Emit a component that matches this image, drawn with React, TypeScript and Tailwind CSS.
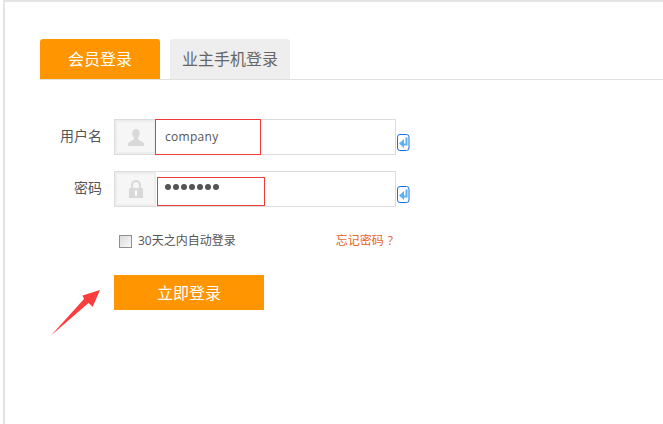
const fontStack = { fontFamily: '"Open Sans", "Noto Sans CJK SC", sans-serif' };

function ReturnKey() {
  return (
    <svg width="13" height="18" viewBox="0 0 13 18" className="ml-[1px] mt-[15px] shrink-0">
      <rect x="0.5" y="0.5" width="11.500" height="16" rx="2.500" fill="#fff" stroke="#1470e8" />
      <path d="M8.500 3.500h2v8H7V14L2 9.500 7 5v4.500h1.500z" fill="#5db2f5" />
    </svg>
  );
}

function UserIcon() {
  return (
    <svg width="16" height="17" viewBox="0 0 16 17">
      <path d="M8 0c2.400 0 3.700 1.800 3.700 4.200 0 2-.8 3.600-1.700 4.600v1.600c1.400.9 4.600 1.600 6 4.100v2.500H0v-2.500c1.400-2.500 4.600-3.200 6-4.100V8.800C5.100 7.800 4.300 6.200 4.300 4.200 4.300 1.800 5.600 0 8 0z" fill="#d9d9d9" />
    </svg>
  );
}

function LockIcon() {
  return (
    <svg width="14" height="18" viewBox="0 0 14 18">
      <path d="M3 8V5a4 4 0 0 1 8 0v3" fill="none" stroke="#d9d9d9" strokeWidth="2" />
      <path d="M0 8h14v10H0z" fill="#d9d9d9" />
      <rect x="6" y="10.500" width="2" height="5" fill="#fff" />
    </svg>
  );
}

type FieldRowProps = {
  label: string;
  icon: React.ReactNode;
  children: React.ReactNode;
  className?: string;
};

function FieldRow({ label, icon, children, className = '' }: FieldRowProps) {
  return (
    <div className={`flex ${className}`}>
      <label className="w-[62px] h-[36px] leading-[34px] text-right text-[14px] text-[#555] mr-[12px]">{label}</label>
      <div className="flex w-[282px] h-[36px] border border-[#dcdcdc]">
        <div className="w-[41px] flex items-center justify-center bg-[#f6f6f6] border-2 border-[#ededed]">{icon}</div>
        <div className="flex-1 flex items-center">{children}</div>
      </div>
      <ReturnKey />
    </div>
  );
}

export default function App() {
  return (
    <div className="relative w-[663px] h-[424px] overflow-hidden bg-white" style={fontStack}>
      <div className="ml-[3px] h-[424px] border-l-2 border-t-2 border-[#e4e4e4] pt-[37px] pl-[35px]">
        <div className="flex gap-[10px] h-[41px] border-b border-[#e0e0e0]">
          <div className="w-[120px] h-[40px] rounded-t-[3px] bg-[#ff9500] text-white text-[16px] leading-[40px] text-center">会员登录</div>
          <div className="w-[120px] h-[40px] rounded-t-[3px] bg-[#eeeeee] text-[#666] text-[16px] leading-[40px] text-center">业主手机登录</div>
        </div>

        <FieldRow label="用户名" className="mt-[39px]" icon={<UserIcon />}>
          <span className="ml-[9px] text-[12px] tracking-[0.3px] text-[#555]">company</span>
        </FieldRow>
        <FieldRow label="密码" className="mt-[16px]" icon={<LockIcon />}>
          <span className="ml-[9px] flex gap-[2px] -mt-[4px]">
            {[0, 1, 2, 3, 4, 5, 6].map((i) => (
              <span key={i} className="w-[6px] h-[6px] rounded-full bg-[#555]" />
            ))}
          </span>
        </FieldRow>

        <div className="flex items-center w-[356px] mt-[26px] ml-[79px] h-[16px]">
          <span className="w-[13px] h-[13px] border border-[#8f8f8f] bg-gradient-to-br from-[#dcdcdc] to-[#f8f8f8] mr-[6px]" />
          <span className="text-[12px] text-[#555]">30天之内自动登录</span>
          <span className="ml-[100px] text-[12px] text-[#e8641b]">忘记密码<span className="ml-[4px]">?</span></span>
        </div>

        <button type="button" className="block w-[150px] h-[35px] ml-[74px] mt-[26px] bg-[#ff9500] text-white text-[16px]">
          立即登录
        </button>
      </div>

      {/* hand-drawn annotations on top of the form */}
      <div className="absolute left-[155px] top-[119px] w-[106px] h-[36px] border border-[#f03a3a]" />
      <div className="absolute left-[157px] top-[177px] w-[108px] h-[29px] border border-[#f03a3a]" />
      <svg className="absolute left-[50px] top-[288px]" width="52" height="50" viewBox="0 0 52 50">
        <path d="M1 47.500L34 11 32.500 7.500 50 2 42.700 18.700 38.500 15z" fill="#fa3e3e" />
      </svg>
    </div>
  );
}
